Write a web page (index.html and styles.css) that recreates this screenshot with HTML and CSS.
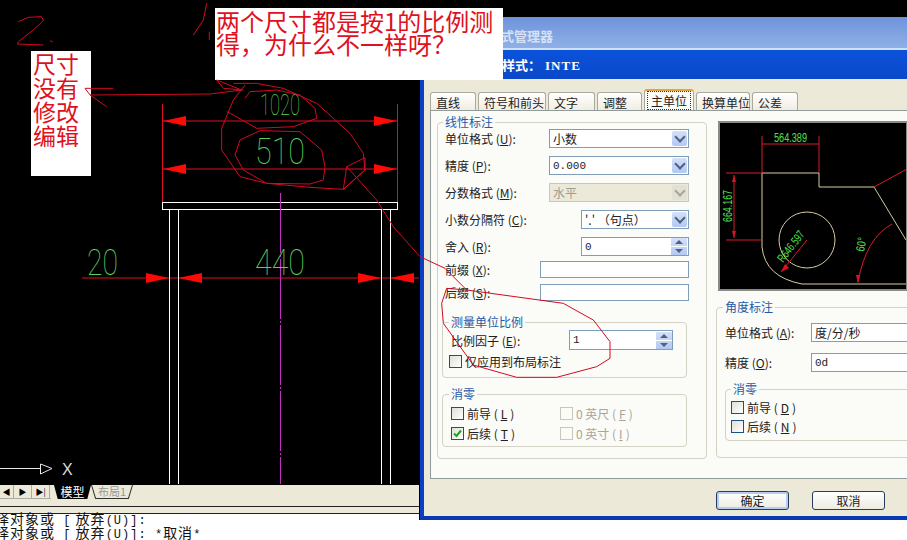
FILE: index.html
```html
<!DOCTYPE html>
<html lang="zh">
<head>
  <meta charset="UTF-8" />
  <title>标注样式管理器</title>
  <link rel="stylesheet" href="styles.css">
</head>
<body>
  <div class="screen">

    <!-- CAD drawing -->
    <svg class="cad" width="907" height="485" viewBox="0 0 907 485">
      <g class="dim">
        <path d="M162.5 104V202M397.5 104V202M163 121H397M163 169H397M82 278H420" />
        <path d="M169.5 268V288M178.5 268V288M381.5 268V288M390.5 268V288" />
      </g>
      <g class="arrow">
        <path d="M163 121L186 116V126ZM397 121L374 116V126Z" />
        <path d="M163 169L186 164V174ZM397 169L374 164V174Z" />
        <path d="M169 278L146 273V283ZM178 278L202 273V283Z" />
        <path d="M381 278L358 273V283ZM390 278L414 273V283Z" />
      </g>
      <g class="part">
        <rect x="162.5" y="202.5" width="235" height="7" />
        <path d="M169.5 210V484M178.5 210V484M381.5 210V484M390.5 210V484" />
      </g>
      <path class="center" d="M280.5 193V484" />
      <g class="num">
        <text x="260" y="115" font-size="30" textLength="40" lengthAdjust="spacingAndGlyphs">1020</text>
        <text x="255" y="164" font-size="36" textLength="50" lengthAdjust="spacingAndGlyphs">510</text>
        <text x="87" y="275" font-size="36" textLength="31" lengthAdjust="spacingAndGlyphs">20</text>
        <text x="255" y="275" font-size="36" textLength="50" lengthAdjust="spacingAndGlyphs">440</text>
      </g>
      <g class="axis">
        <path d="M0 468.5H40" />
        <path d="M40.5 464V474L52 468.5Z" />
        <text x="62" y="475" font-size="16">X</text>
      </g>
    </svg>

    <div class="layout-bar">
      <div class="nav-btns">
        <span class="nav-btn">&#9664;</span>
        <span class="nav-btn">&#9654;</span>
        <span class="nav-btn">&#9654;|</span>
      </div>
      <div class="sheet sheet-on"><span>模型</span></div>
      <div class="sheet"><span>布局1</span></div>
    </div>

    <div class="command">
      <div>选择对象或 &nbsp;<span class="mono">[</span>&nbsp;放弃<span class="mono">(U)]:</span></div>
      <div>选择对象或 &nbsp;<span class="mono">[</span>&nbsp;放弃<span class="mono">(U)]:</span> &nbsp;<span class="mono">*</span>取消<span class="mono">*</span></div>
    </div>

    <!-- dialog window -->
    <div class="dialog">
      <div class="title-back">标注样式管理器</div>
      <div class="title-main">修改标注样式：<span class="title-name">INTE</span></div>
      <div class="dialog-body">
        <div class="tabs">
          <div class="tab tab-a">直线</div>
          <div class="tab tab-b">符号和前头</div>
          <div class="tab tab-c">文字</div>
          <div class="tab tab-d">调整</div>
          <div class="tab tab-e tab-on"><span>主单位</span></div>
          <div class="tab tab-f">换算单位</div>
          <div class="tab tab-g">公差</div>
        </div>

        <div class="pane">
          <fieldset class="group group-linear">
            <legend>线性标注</legend>
            <div class="field">
              <label>单位格式 (<u>U</u>):</label>
              <div class="select w140"><span>小数</span><i class="drop"></i></div>
            </div>
            <div class="field">
              <label>精度 (<u>P</u>):</label>
              <div class="select w140"><span class="mono">0.000</span><i class="drop"></i></div>
            </div>
            <div class="field">
              <label>分数格式 (<u>M</u>):</label>
              <div class="select w140 off"><span>水平</span><i class="drop"></i></div>
            </div>
            <div class="field">
              <label>小数分隔符 (<u>C</u>):</label>
              <div class="select w108"><span>'.' （句点）</span><i class="drop"></i></div>
            </div>
            <div class="field field-last">
              <label>舍入 (<u>R</u>):</label>
              <div class="select w108"><span class="mono">0</span><i class="spin"></i></div>
            </div>
            <div class="field field-thin">
              <label>前缀 (<u>X</u>):</label>
              <div class="select w149"></div>
            </div>
            <div class="field field-thin">
              <label>后缀 (<u>S</u>):</label>
              <div class="select w149"></div>
            </div>

            <fieldset class="group group-scale">
              <legend>测量单位比例</legend>
              <div class="field scale-row">
                <label>比例因子 (<u>E</u>):</label>
                <div class="select w104"><span class="mono">1</span><i class="spin"></i></div>
              </div>
              <label class="check"><i class="box"></i>仅应用到布局标注</label>
            </fieldset>

            <fieldset class="group group-zero">
              <legend>消零</legend>
              <div class="zero-grid">
                <label class="check"><i class="box"></i>前导 (<u>L</u>)</label>
                <label class="check dim-check"><i class="box"></i>0 英尺 (<u>F</u>)</label>
                <label class="check"><i class="box on">
                  <svg width="11" height="11" viewBox="0 0 11 11"><path d="M2 5.5L4.5 8L9 2.5" /></svg>
                </i>后续 (<u>T</u>)</label>
                <label class="check dim-check"><i class="box"></i>0 英寸 (<u>I</u>)</label>
              </div>
            </fieldset>
          </fieldset>

          <div class="side">
            <!-- preview of the dimension style -->
            <svg class="preview" width="188" height="168" viewBox="0 0 188 168">
              <g class="pv-line">
                <path d="M43 51H100V65H155M155 65L187 118M43 51V125Q46 155 83 162H188" />
                <circle cx="88" cy="118" r="28" />
              </g>
              <g class="pv-dim">
                <path d="M155 65L188 47" />
                <path d="M43 14V51M100 14V51M43 22H100" />
                <path d="M7 51H43M7 118H43M15 53V116" />
                <path d="M88 118L62 150" />
                <path d="M173 102Q147 116 139 160" />
              </g>
              <g class="pv-arrow">
                <path d="M15 53L13 60H17ZM15 116L13 109H17ZM62 150L66 142L70 146ZM139 162L137 153H141Z" />
              </g>
              <g class="pv-num">
                <text x="55" y="20" font-size="12" textLength="33" lengthAdjust="spacingAndGlyphs">564.389</text>
                <text transform="translate(13 100) rotate(-90)" font-size="12" textLength="32" lengthAdjust="spacingAndGlyphs">664.167</text>
                <text transform="translate(64 141) rotate(-52)" font-size="12" textLength="36" lengthAdjust="spacingAndGlyphs">R646.597</text>
                <text transform="translate(145 130) rotate(-80)" font-size="12" textLength="14" lengthAdjust="spacingAndGlyphs">60°</text>
              </g>
            </svg>

            <fieldset class="group group-angle">
              <legend>角度标注</legend>
              <div class="field">
                <label>单位格式 (<u>A</u>):</label>
                <div class="select w150"><span>度/分/秒</span></div>
              </div>
              <div class="field">
                <label>精度 (<u>O</u>):</label>
                <div class="select w150"><span class="mono">0d</span></div>
              </div>
              <fieldset class="group group-zero2">
                <legend>消零</legend>
                <label class="check"><i class="box"></i>前导 (<u>D</u>)</label>
                <label class="check"><i class="box"></i>后续 (<u>N</u>)</label>
              </fieldset>
            </fieldset>
          </div>
        </div>

        <div class="footer">
          <button class="btn btn-ok" type="button">确定</button>
          <button class="btn" type="button">取消</button>
        </div>
      </div>
    </div>

    <!-- pasted notes and mouse scribbles on top -->
    <div class="note note-top">两个尺寸都是按1的比例测得，为什么不一样呀？</div>
    <div class="note note-left">尺寸<br>没有<br>修改<br>编辑</div>

    <!-- scribble coordinates are 3x screen pixels -->
    <svg class="scribble" width="907" height="540" viewBox="0 0 2721 1620">
      <path d="M55 65L85 52L125 50L130 62L100 90L55 125L52 132L130 135M150 122L158 126" />
      <path d="M620 10L610 60L580 105M628 95V120" />
      <path d="M340 265H255L270 285L320 320M270 285L630 282L725 270L650 240L670 265L730 270" />
      <path d="M735 295L750 275L830 270L900 285L945 325L950 355L880 380L770 385L700 345L680 335" />
      <path d="M735 255L700 300L665 385L665 450L720 530L800 550L930 562L1030 568L1095 510L1090 460L1050 400L950 310L850 265L770 250L700 250" />
      <path d="M720 420L780 392L900 395L965 450L975 500L970 540L930 552L800 550L730 510L705 465Z" />
      <path d="M1040 500L1095 473V510L1030 568Z" />
      <path d="M1040 500L1130 600L1180 680L1260 770L1335 805L1400 870" />
      <path d="M1400 870L1690 910L1740 938L1780 960L1830 1025L1830 1075L1790 1100L1670 1132L1550 1132L1420 1095L1330 970L1325 910L1340 865L1400 870" />
    </svg>
  </div>
</body>
</html>
```

FILE: styles.css
```css
* {
  box-sizing: border-box;
}

body {
  margin: 0;
  font-family: "Noto Sans CJK SC", sans-serif;
  font-size: 12px;
  color: #222;
}

u {
  text-decoration: underline;
}

.screen {
  position: relative;
  width: 907px;
  height: 540px;
  overflow: hidden;
  background: #000;
}

/* CAD side */
.cad {
  display: block;
}

.dim path {
  fill: none;
  stroke: #e01020;
  stroke-width: 1;
}

.arrow path {
  fill: #ff0808;
}

.part rect,
.part path {
  fill: none;
  stroke: #fff;
  stroke-width: 1;
}

.center {
  stroke: #c030c0;
  stroke-width: 1;
  stroke-dasharray: 60 2 2 2;
}

.num text {
  font-family: Roboto, sans-serif;
  font-weight: 100;
  fill: #5ccf5c;
}

.axis path {
  fill: none;
  stroke: #e8e8e8;
}

.axis text {
  font-family: "Liberation Sans", sans-serif;
  font-weight: 400;
  fill: #ddd;
}

.layout-bar {
  display: flex;
  height: 21px;
  background: #ece9d8;
  padding-right: 487px;
  align-items: flex-start;
}

.nav-btns {
  display: flex;
  height: 14px;
  width: 51px;
  margin-right: 3px;
  border-bottom: 1px solid #aaa;
}

.nav-btn {
  width: 18px;
  height: 14px;
  border-right: 1px solid #aaa;
  font-size: 8px;
  line-height: 14px;
  text-align: center;
  color: #000;
  white-space: nowrap;
}

.nav-btn:first-child {
  width: 14px;
}

.sheet {
  width: 42px;
  height: 14px;
  padding: 0 1px 1px;
  background: #333;
  clip-path: polygon(0 0, 100% 0, 90% 100%, 10% 100%);
}

.sheet span {
  display: block;
  height: 100%;
  background: #ece9d8;
  clip-path: polygon(0 0, 100% 0, 90% 100%, 10% 100%);
  font-size: 11px;
  line-height: 13px;
  text-align: center;
  color: #999;
}

.sheet-on {
  width: 37px;
  background: #000;
  margin-right: 0;
}

.sheet-on span {
  background: #000;
  color: #fff;
  font-size: 12px;
}

.command {
  height: 34px;
  border-top: 1px solid #222;
  box-shadow: inset 0 6px 0 #ece9d8, inset 0 7px 0 #222;
  background: #fff;
  padding-top: 4px;
  margin-left: -20px;
  font-size: 14px;
  line-height: 14px;
  letter-spacing: 1px;
  color: #111;
  white-space: nowrap;
}

.command div {
  height: 14px;
}

.command .mono {
  font-size: 12px;
}

/* dialog window */
.dialog {
  position: absolute;
  left: 420px;
  top: 17px;
  width: 560px;
  height: 503px;
  border-left: 4px solid #0b3fc4;
  border-bottom: 4px solid #0a3ab0;
  box-shadow: -1px 0 0 #000;
}

.title-back {
  height: 33px;
  padding: 9px 0 0 38px;
  background: linear-gradient(#6f93dc, #8fb0e6);
  border-bottom: 2px solid #cfe0f8;
  font-weight: 700;
  font-size: 13px;
  color: #d5e2f5;
}

.title-main {
  height: 29px;
  padding: 5px 0 0 26px;
  background: linear-gradient(#0a52dc, #0a48c8);
  font-weight: 700;
  font-size: 13px;
  color: #fff;
}

.title-name {
  font-family: "Liberation Serif", serif;
  letter-spacing: 1px;
  margin-left: 4px;
}

.dialog-body {
  height: 437px;
  padding: 13px 0 0 6px;
  background: #ece9d8;
}

.tabs {
  display: flex;
  height: 18px;
}

.tab {
  margin-right: 2px;
  padding: 1px 0 0 5px;
  border: 1px solid #a9a99c;
  border-bottom: 0;
  border-radius: 3px 3px 0 0;
  background: linear-gradient(#fff, #f0eee2);
  font-size: 12px;
  line-height: 17px;
  white-space: nowrap;
}

.tab-a { width: 46px; }
.tab-b { width: 68px; }
.tab-c { width: 47px; }
.tab-d { width: 45px; }
.tab-e { width: 50px; }
.tab-f { width: 54px; }
.tab-g { width: 46px; }

.tab-on {
  height: 21px;
  margin-top: -3px;
  position: relative;
  z-index: 1;
  border-top: 2px solid #e8a33c;
  background: #fbfbf8;
  padding-left: 3px;
}

.tab-on span {
  outline: 1px dotted #333;
  padding: 0 3px;
}

.pane {
  display: flex;
  height: 369px;
  padding: 3px 0 0 6px;
  border: 1px solid #919b9c;
  background: #fbfbf8;
}

.group {
  margin: 0;
  padding: 0;
  min-width: 0;
  border: 1px solid #d4d2c4;
  border-radius: 4px;
}

.group legend {
  padding: 0 2px;
  line-height: 16px;
  font-size: 12px;
  color: #1f5aa8;
}

.group-linear {
  flex: none;
  width: 270px;
  height: 345px;
  padding: 0 17px 0 7px;
}

.group-linear > legend {
  margin: 0 0 -1px -2px;
}

.field {
  display: flex;
  justify-content: space-between;
  align-items: center;
  height: 19px;
  margin-bottom: 8px;
  font-size: 12px;
}

.field-last {
  margin-bottom: 5px;
}

.field-thin {
  height: 17px;
  margin-bottom: 6px;
}

.select {
  display: flex;
  align-items: center;
  justify-content: space-between;
  height: 100%;
  padding: 0 1px 0 3px;
  border: 1px solid #7f9db9;
  background: #fff;
  white-space: nowrap;
}

.w104 { width: 104px; }
.w108 { width: 108px; }
.w140 { width: 140px; }
.w149 { width: 149px; }
.w150 { width: 150px; }

.mono {
  font-family: "Liberation Mono", monospace;
  font-size: 11px;
}

.drop {
  position: relative;
  flex: none;
  width: 15px;
  height: 15px;
  border-radius: 2px;
  background: linear-gradient(#d4e0f8, #b4c8f2);
}

.drop::after {
  content: "";
  position: absolute;
  left: 4px;
  top: 2px;
  width: 6px;
  height: 6px;
  border-right: 2px solid #4d6185;
  border-bottom: 2px solid #4d6185;
  transform: rotate(45deg);
}

.spin {
  position: relative;
  flex: none;
  width: 16px;
  height: 17px;
  background:
    linear-gradient(to bottom, transparent 47%, #fff 47%, #fff 53%, transparent 53%),
    linear-gradient(#d4e0f8, #b4c8f2);
}

.spin::before,
.spin::after {
  content: "";
  position: absolute;
  left: 4px;
  border-left: 4px solid transparent;
  border-right: 4px solid transparent;
}

.spin::before {
  top: 2px;
  border-bottom: 4px solid #4d6185;
}

.spin::after {
  bottom: 2px;
  border-top: 4px solid #4d6185;
}

.off {
  border-color: #c9c7ba;
  background: #ece9d8;
  color: #a09e92;
}

.off .drop {
  background: #e2e0d2;
}

.off .drop::after {
  border-color: #a7a69a;
}

.check {
  display: flex;
  align-items: center;
  gap: 3px;
  height: 13px;
  font-size: 12px;
  white-space: nowrap;
}

.box {
  flex: none;
  width: 13px;
  height: 13px;
  border: 1px solid #1c5180;
  background: linear-gradient(135deg, #e0dfd6, #fff);
}

.box svg {
  display: block;
}

.box svg path {
  fill: none;
  stroke: #21a121;
  stroke-width: 2;
}

.dim-check {
  color: #a8a69c;
}

.dim-check .box {
  border-color: #c9c7ba;
  background: #fbfbf8;
}

.group-scale {
  width: 245px;
  height: 64px;
  margin: 13px 0 0 -3px;
  padding: 0 0 0 8px;
}

.group-scale legend,
.group-zero legend {
  margin-left: -2px;
}

.scale-row {
  height: 20px;
  margin: 0 13px 5px 0;
}

.scale-row .select {
  padding-right: 0;
}

.group-scale .check {
  margin-left: -2px;
}

.group-zero {
  width: 245px;
  height: 61px;
  margin: 8px 0 0 -3px;
  padding: 5px 0 0 8px;
}

.zero-grid {
  display: grid;
  grid-template-columns: 109px 1fr;
  row-gap: 7px;
}

.side {
  flex: none;
  width: 220px;
  margin-left: 9px;
}

.preview {
  display: block;
  margin: 8px 0 0 3px;
  background: #000;
  outline: 2px solid #8a8a84;
  outline-offset: -1px;
  overflow: hidden;
}

.pv-line path,
.pv-line circle {
  fill: none;
  stroke: #d8cba0;
}

.pv-dim path {
  fill: none;
  stroke: #d81c30;
}

.pv-arrow path {
  fill: #e01020;
}

.pv-num text {
  font-family: "Liberation Sans", sans-serif;
  fill: #4fe04f;
}

.group-angle {
  width: 300px;
  height: 159px;
  margin-top: 9px;
  padding: 8px 0 0 8px;
}

.group-angle > legend {
  margin-left: -2px;
}

.group-angle .field {
  justify-content: flex-start;
  margin-bottom: 11px;
}

.group-angle label {
  width: 86px;
}

.group-zero2 {
  width: 205px;
  height: 60px;
  margin-top: -2px;
  padding: 4px 0 0 5px;
}

.group-zero2 .check {
  margin-bottom: 6px;
  width: auto;
}

.footer {
  display: flex;
  gap: 23px;
  padding: 12px 0 0 286px;
}

.btn {
  width: 73px;
  height: 19px;
  padding: 0;
  border: 1px solid #2a3a5c;
  border-radius: 3px;
  background: linear-gradient(#fff, #ecebe2);
  font-family: "Noto Sans CJK SC", sans-serif;
  font-size: 12px;
  line-height: 15px;
  color: #222;
}

.btn-ok {
  box-shadow: inset 0 0 0 2px #b4cdf0;
}

/* pasted notes */
.note {
  position: absolute;
  background: #fff;
  color: #e01020;
  font-size: 24px;
  line-height: 23px;
}

.note-top {
  left: 215px;
  top: 8px;
  width: 288px;
  height: 72px;
  padding: 1px 0 0 1px;
}

.note-left {
  left: 31px;
  top: 51px;
  width: 60px;
  height: 125px;
  padding: 0 0 0 2px;
  font-size: 23px;
  line-height: 24px;
}

.scribble {
  position: absolute;
  left: 0;
  top: 0;
  pointer-events: none;
}

.scribble path {
  fill: none;
  stroke: #d40a20;
  stroke-width: 3;
  stroke-linejoin: round;
}
```
